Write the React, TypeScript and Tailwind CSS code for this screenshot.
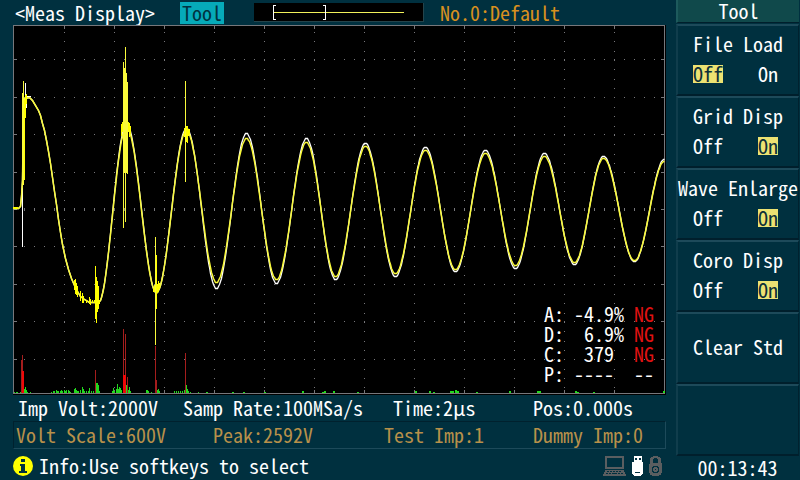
import { useState } from "react";
import { clsx } from "clsx";

type Point = [number, number];

const PLOT = { left: 13, top: 25, width: 653, height: 370 };

const GRID_X = [64, 114, 164, 214, 264, 314, 364, 414, 464, 514, 564, 614];
const GRID_Y = [59, 97, 134, 172, 209, 246, 284, 321, 359];

// Opening part of the response, before the ringing settles
const ATTACK: Point[] = [
  [13, 208], [18, 208], [20, 206], [21, 196], [22, 180], [23, 110], [24, 98],
  [29, 97], [32, 100], [35, 105], [38, 110], [40, 115], [42, 123], [44, 130],
  [46, 140], [48, 151], [50, 163], [52, 177], [54, 191], [56, 204], [58, 219],
  [60, 232], [62, 244], [65, 258], [68, 269], [71, 278], [74, 285], [77, 291],
  [80, 296], [84, 299], [89, 302], [98, 302],
];

const YELLOW_PEAKS: Point[] = [
  [98, 302], [126, 127], [156, 292], [186, 130], [216, 282], [246, 138],
  [276, 279], [306, 142], [335, 276], [365, 146], [395, 273], [425, 150],
  [455, 269], [485, 153], [515, 265], [544, 156], [574, 262], [603, 158],
  [634, 260], [664, 161],
];

const WHITE_PEAKS: Point[] = [
  [98, 302], [126, 124], [156, 292], [186, 128], [216, 288], [246, 133],
  [276, 283], [306, 138], [335, 279], [365, 143], [395, 276], [425, 147],
  [455, 271], [485, 150], [515, 268], [544, 153], [574, 264], [603, 156],
  [634, 261], [664, 159],
];

// x, top, bottom
const SPIKES: [number, number, number][] = [
  [22, 93, 188], [23, 81, 185], [24, 100, 180], [25, 95, 118], [26, 94, 104],
  [74, 280, 290], [75, 279, 294], [76, 283, 295], [77, 286, 297], [80, 291, 301],
  [82, 293, 303], [83, 296, 303], [86, 300, 303], [89, 297, 304], [90, 299, 305],
  [92, 300, 303], [94, 300, 303], [95, 266, 319], [96, 277, 323], [97, 281, 312],
  [98, 286, 309], [99, 300, 304], [121, 124, 136], [122, 122, 132],
  [123, 62, 228], [124, 68, 173], [125, 47, 222], [126, 73, 173], [127, 82, 174],
  [128, 122, 132], [129, 123, 137], [130, 126, 134], [153, 288, 292],
  [154, 285, 292], [155, 237, 345], [156, 255, 309], [157, 284, 293],
  [158, 281, 292], [159, 283, 289], [184, 128, 137], [185, 81, 182],
  [186, 126, 142], [187, 126, 143], [188, 129, 136], [189, 129, 134],
];

const RED_BARS: [number, number][] = [
  [21, 360], [22, 355], [23, 371], [95, 370], [123, 329], [124, 375],
  [125, 334], [127, 377], [155, 346], [156, 380], [185, 353],
];

const GREEN_BARS: [number, number][] = [
  [14, 392], [16, 392], [17, 392], [20, 392], [24, 389], [25, 387], [26, 390],
  [27, 392], [30, 392], [51, 392], [53, 391], [54, 391], [56, 390], [57, 391],
  [58, 391], [60, 391], [61, 390], [62, 391], [64, 390], [65, 391], [66, 390],
  [68, 390], [69, 391], [70, 392], [74, 389], [75, 388], [76, 390], [77, 391],
  [78, 391], [80, 390], [82, 387], [83, 389], [84, 391], [86, 391], [88, 391],
  [89, 388], [91, 391], [93, 391], [96, 383], [97, 383], [98, 385], [99, 391],
  [112, 391], [113, 388], [114, 391], [116, 389], [117, 384], [118, 389],
  [119, 387], [120, 388], [121, 390], [126, 385], [128, 390], [129, 387],
  [130, 391], [146, 390], [147, 390], [148, 391], [151, 392], [157, 390],
  [158, 389], [159, 391], [174, 391], [176, 391], [178, 391], [180, 391],
  [182, 391], [184, 390], [186, 385], [187, 389], [188, 391], [190, 392],
  [198, 392], [206, 392], [232, 392], [243, 392], [264, 392], [302, 391],
  [322, 392], [324, 391], [333, 391], [357, 392], [415, 391], [429, 391],
  [433, 392], [450, 391], [452, 391], [455, 390], [457, 391], [476, 392],
  [509, 391], [537, 391], [539, 391], [575, 391], [577, 392], [593, 392],
  [663, 391],
];

// Joins neighbouring extrema with half a cosine
function ringing(peaks: Point[]): Point[] {
  const points: Point[] = [];
  for (let i = 0; i < peaks.length - 1; i++) {
    const [x0, y0] = peaks[i];
    const [x1, y1] = peaks[i + 1];
    for (let x = x0; x < x1; x++) {
      const t = (x - x0) / (x1 - x0);
      points.push([x, Math.round(y0 + ((y1 - y0) * (1 - Math.cos(Math.PI * t))) / 2)]);
    }
  }
  points.push(peaks[peaks.length - 1]);
  return points;
}

function linePath(points: Point[]) {
  return "M" + points.map(([x, y]) => `${x}.5 ${y}.5`).join("L");
}

function Waveform() {
  const { left, top, width, height } = PLOT;
  const bottom = 393;
  const right = 664;

  return (
    <svg
      viewBox={`${left} ${top} ${width} ${height}`}
      className="block h-auto w-full bg-black"
      shapeRendering="crispEdges"
      role="img"
      aria-label="Impulse response"
    >
      <g fill="#77777b">
        {GRID_Y.map((y) =>
          Array.from({ length: 64 }, (_, i) => 24 + i * 10).map((x) =>
            y === 209 ? (
              <rect key={`${x}-${y}`} x={x} y={208} width={1} height={3} />
            ) : (
              <rect key={`${x}-${y}`} x={x} y={y} width={1} height={1} />
            )
          )
        )}
        {GRID_X.map((x) =>
          Array.from({ length: 39 }, (_, i) => Math.round(32 + i * 9.35)).map((y) => (
            <rect key={`v${x}-${y}`} x={x} y={y} width={1} height={1} />
          ))
        )}
        {GRID_X.map((x) => (
          <g key={x}>
            <rect x={x} y={26} width={1} height={3} />
            <rect x={x} y={390} width={1} height={3} />
          </g>
        ))}
        {GRID_Y.map((y) => (
          <g key={y}>
            <rect x={14} y={y} width={3} height={1} />
            <rect x={661} y={y} width={3} height={1} />
          </g>
        ))}
        <rect x={13} y={25} width={652} height={1} />
        <rect x={13} y={25} width={1} height={369} />
        <rect x={right} y={25} width={1} height={369} />
        <rect x={13} y={bottom} width={652} height={1} />
      </g>

      <g fill="#22d81e">
        {GREEN_BARS.map(([x, y]) => (
          <rect key={x} x={x} y={y} width={x > 200 ? 2 : 1} height={bottom - y} />
        ))}
      </g>
      <g>
        {RED_BARS.map(([x, y]) => (
          <rect key={x} x={x} y={y} width={1} height={bottom - y} fill="#a51d1d" />
        ))}
        <rect x={22} y={371} width={2} height={22} fill="#f00808" />
        <rect x={123} y={375} width={3} height={18} fill="#f00808" />
      </g>

      <g fill="none">
        <path
          d={linePath([...ATTACK, ...ringing(WHITE_PEAKS)])}
          stroke="#ffffff"
          strokeWidth={1.3}
          shapeRendering="auto"
        />
        <path d="M22.5 95V247M25.5 83V118M26.5 94V108M27 96.5h4" stroke="#ffffff" />
        <path
          d={linePath([...ATTACK, ...ringing(YELLOW_PEAKS)])}
          stroke="#f9f93a"
          strokeWidth={1.5}
          shapeRendering="auto"
        />
      </g>
      <g fill="#ffff00">
        {SPIKES.map(([x, y0, y1]) => (
          <rect
            key={x}
            x={x}
            y={y0}
            width={1}
            height={y1 - y0}
            fill={y1 - y0 > 90 ? "#f9f93a" : "#ffff00"}
          />
        ))}
        <rect x={13} y={207} width={5} height={2} />
      </g>
    </svg>
  );
}

function Overview() {
  return (
    <svg
      viewBox="0 0 170 19"
      className="h-[19px] w-[170px]"
      shapeRendering="crispEdges"
      aria-hidden="true"
    >
      <path d="M0 0H170V19H0z" fill="#24444b" />
      <path d="M0 0H169V18H0z" fill="#000" />
      <path d="M20 9.5H150" stroke="#f2f25a" />
      <path d="M22 2.5H19.5V16.5H22M69 2.5H71.5V16.5H69" fill="none" stroke="#fff" />
    </svg>
  );
}

const RESULTS = [
  { key: "A:", value: "-4.9%", verdict: "NG" },
  { key: "D:", value: "6.9%", verdict: "NG" },
  { key: "C:", value: "379\u00a0", verdict: "NG" },
  { key: "P:", value: "----\u00a0", verdict: "--" },
];

function Results() {
  return (
    <table className="absolute right-3 bottom-[11px] leading-5 text-white">
      <tbody>
        {RESULTS.map((row) => (
          <tr key={row.key}>
            <th className="p-0 text-left font-normal">{row.key}</th>
            <td className="p-0 pl-[10px] text-right whitespace-pre">{row.value}</td>
            <td className={clsx("p-0 pl-[10px]", row.verdict === "NG" && "text-[#e01212]")}>
              {row.verdict}
            </td>
          </tr>
        ))}
      </tbody>
    </table>
  );
}

interface SoftkeyProps {
  label: string;
  initial?: boolean;
}

function Softkey({ label, initial }: SoftkeyProps) {
  const [on, setOn] = useState(initial);
  const isToggle = initial !== undefined;

  return (
    <button
      type="button"
      aria-pressed={isToggle ? on : undefined}
      onClick={() => isToggle && setOn(!on)}
      className="flex h-[72px] w-full flex-col items-center justify-center gap-[11px] border-t-2 border-r border-b-2 border-l-2 border-t-[#1d4a5a] border-r-[#00222f] border-b-[#001f2c] border-l-[#103d4c] pb-[3px] leading-5 whitespace-nowrap text-white"
    >
      <span>{label}</span>
      {isToggle && (
        <span className="flex w-[90px] items-center justify-between pr-[5px]">
          <span className={clsx("leading-[18px]", !on && "bg-[#ece272] text-[#0d3038]")}>Off</span>
          <span className={clsx("leading-[18px]", on && "bg-[#ece272] text-[#0d3038]")}>On</span>
        </span>
      )}
    </button>
  );
}

function StatusIcons() {
  return (
    <svg viewBox="0 0 60 20" className="h-5 w-[60px]" shapeRendering="crispEdges" aria-hidden="true">
      <g fill="#5b5e60">
        <path d="M2 0h19v13H2zM4 2v9h15V2z" fillRule="evenodd" />
        <path d="M2 14h19v2h1v2h1v2H0v-2h1v-2h1z" />
      </g>
      <path
        d="M4 15.5h2m1 0h2m1 0h2m1 0h2m1 0h2M3 17.5h2m1 0h2m1 0h5m1 0h2m1 0h2"
        stroke="#00303f"
      />
      <path d="M31 0h8v6h1v12h-1v1h-1v1h-7v-1h-1v-1h-1V6h2z" fill="#fff" />
      <path d="M32 2h2v2h-2zM36 2h2v2h-2zM32 16h5v1h-5z" fill="#00303f" />
      <path
        d="M50 0h5v1h2v1h1v5h1v10h-1v2h-2v1h-7v-1h-2v-2h-1V8h1V2h1V1h2zM50 3v4h5V3h-1V2h-3v1z"
        fill="#5b5e60"
        fillRule="evenodd"
      />
      <path
        d="M50 10h5v1h1v5h-1v1h-5v-1h-1v-5h1zM51 11v1h-1v3h1v1h3v-1h1v-3h-1v-1z"
        fill="#00303f"
        fillRule="evenodd"
      />
      <path d="M52 13h1v1h-1z" fill="#00303f" />
    </svg>
  );
}

function InfoIcon() {
  return (
    <svg viewBox="0 0 20 20" className="size-5" aria-hidden="true">
      <circle cx="10" cy="10" r="10" fill="#ffff00" />
      <path d="M8 3h4v3H8zM7 8h5v7h2v2H6v-2h2v-5H7z" fill="#00303f" />
    </svg>
  );
}

export default function App() {
  return (
    <div className="flex min-h-screen bg-[#00303f] font-['Noto_Sans_Mono_CJK_JP','Noto_Sans_CJK_JP','Liberation_Mono',monospace] text-[20px] leading-6 whitespace-nowrap text-white">
      <main className="flex min-w-0 flex-1 flex-col pr-[10px] pl-[13px]">
        <header className="flex h-[25px] items-center pl-[2px]">
          <h1>&lt;Meas Display&gt;</h1>
          <span className="ml-[25px] bg-[#06aab9] px-[2px] leading-[22px] text-[#003341]">Tool</span>
          <span className="mr-4 ml-[30px]">
            <Overview />
          </span>
          <span className="text-[#d9901e]">No.0:Default</span>
        </header>

        <section className="relative">
          <Waveform />
          <Results />
        </section>

        <div className="grid grid-cols-[165fr_210fr_140fr_133fr] pl-[5px] leading-[26px]">
          <span>Imp Volt:2000V</span>
          <span>Samp Rate:100MSa/s</span>
          <span>Time:2µs</span>
          <span>Pos:0.000s</span>
        </div>
        <div className="grid grid-cols-[197fr_171fr_149fr_132fr] border border-t-[#00212e] border-r-[#1d4a5a] border-b-[#1d4a5a] border-l-[#00212e] pl-[2px] leading-[26px] text-[#b8904a]">
          <span>Volt Scale:600V</span>
          <span>Peak:2592V</span>
          <span>Test Imp:1</span>
          <span>Dummy Imp:0</span>
        </div>

        <footer className="flex flex-1 items-center gap-[6px] pt-[2px] pr-[3px]">
          <InfoIcon />
          <span className="flex-1">Info:Use softkeys to select</span>
          <StatusIcons />
        </footer>
      </main>

      <aside className="flex w-[124px] shrink-0 flex-col pr-px">
        <h2 className="mb-px h-[23px] border-b border-l-2 border-b-[#001f2c] border-l-[#1d5a5c] bg-[#10494b] text-center leading-[22px]">
          Tool
        </h2>
        <Softkey label="File Load" initial={false} />
        <Softkey label="Grid Disp" initial={true} />
        <Softkey label="Wave Enlarge" initial={true} />
        <Softkey label="Coro Disp" initial={true} />
        <Softkey label="Clear Std" />
        <Softkey label="" />
        <time className="flex flex-1 items-center justify-center">00:13:43</time>
      </aside>
    </div>
  );
}
